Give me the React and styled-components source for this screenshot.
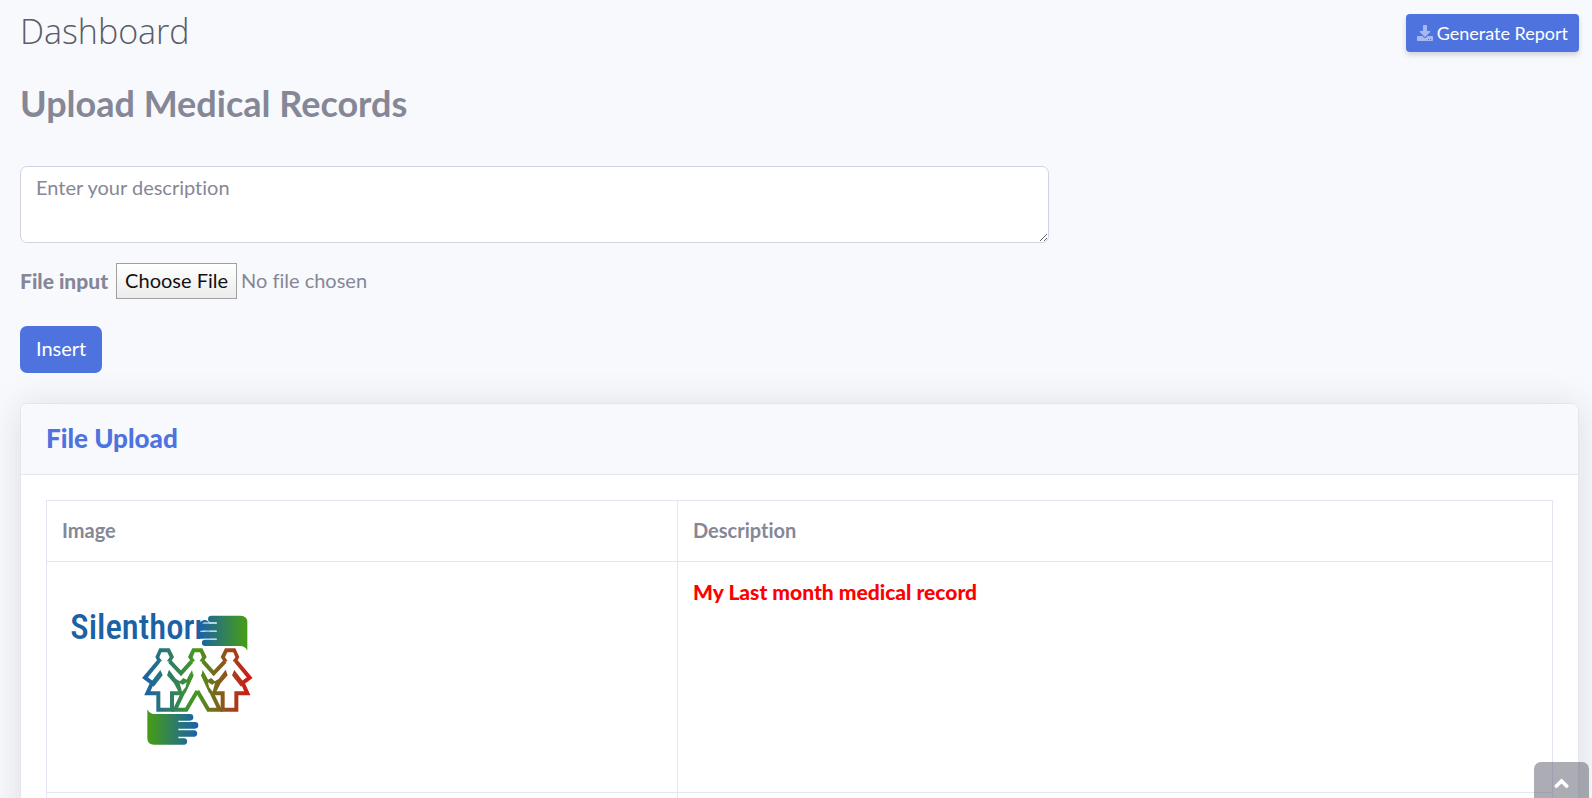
import React from 'react';
import styled, { createGlobalStyle } from 'styled-components';
import { FaDownload, FaAngleUp } from 'react-icons/fa';

const GlobalStyle = createGlobalStyle`
  *, *::before, *::after { box-sizing: border-box; }
  body {
    margin: 0;
    background: #f8f9fc;
    color: #858796;
    font-family: Lato, "Liberation Sans", sans-serif;
    font-size: 20px;
    font-variant-ligatures: none;
    line-height: 30px;
  }
  button, input, textarea { font-family: inherit; font-variant-ligatures: inherit; }
`;

const Page = styled.main`
  height: 100vh;
  overflow-y: auto;
  scrollbar-width: none;
  padding: 10px 13px 30px 20px;
`;

const TopBar = styled.header`
  display: flex;
  align-items: flex-end;
  justify-content: space-between;
  margin-bottom: 30px;
`;

const PageTitle = styled.h1`
  margin: 0;
  color: #5a5c69;
  font-family: "Open Sans", sans-serif;
  font-size: 34px;
  line-height: 42px;
  font-weight: 300;
`;

const SectionTitle = styled.h2`
  margin: 0;
  font-size: 36px;
  line-height: 42px;
  font-weight: 700;
`;

const ReportLink = styled.a`
  display: flex;
  align-items: center;
  gap: 4px;
  height: 38px;
  padding: 0 11px;
  border-radius: 4px;
  background: #4e73df;
  box-shadow: 0 3px 5px rgba(58, 59, 69, 0.2);
  color: #fff;
  font-size: 18px;
  text-decoration: none;
  svg { font-size: 16px; opacity: 0.5; }
`;

const Form = styled.form`
  display: flex;
  flex-direction: column;
  align-items: flex-start;
  margin: 42px 0 30px;
`;

const Description = styled.textarea`
  display: block;
  width: 66%;
  height: 77px;
  padding: 5px 15px;
  border: 1px solid #d1d3e2;
  border-radius: 7px;
  background: #fff;
  color: #6e707e;
  font-size: 20px;
  line-height: 30px;
  resize: vertical;
  &::placeholder { color: #858796; opacity: 1; }
`;

const FileRow = styled.div`
  display: flex;
  align-items: center;
  gap: 8px;
  margin: 20px 0 27px;
`;

const FileLabel = styled.label`
  font-size: 21px;
  font-weight: 900;
`;

const FileInput = styled.input`
  height: 36px;
  width: 400px;
  color: #858796;
  font-size: 20px;
  line-height: 30px;
  &::file-selector-button {
    height: 36px;
    margin: 0 4px 0 0;
    padding: 0 8px 2px;
    border: 1px solid #a0a0a0;
    border-radius: 0;
    background: linear-gradient(#fff, #ececec);
    color: #111;
    font: inherit;
  }
`;

const InsertButton = styled.button`
  height: 47px;
  padding: 0 16px 3px;
  border: 0;
  border-radius: 7px;
  background: #4e73df;
  color: #fff;
  font-size: 20px;
`;

const Card = styled.section`
  border: 1px solid #e3e6f0;
  border-radius: 7px;
  background: #fff;
  box-shadow: 0 3px 35px rgba(58, 59, 69, 0.15);
`;

const CardHeader = styled.header`
  padding: 19px 25px 21px;
  border-bottom: 1px solid #e3e6f0;
  border-radius: 6px 6px 0 0;
  background: #f8f9fc;
`;

const CardTitle = styled.h2`
  margin: 0;
  color: #4e73df;
  font-size: 26px;
  line-height: 30px;
  font-weight: 900;
`;

const CardBody = styled.div`
  padding: 25px;
`;

const RecordTable = styled.table`
  width: 100%;
  border-collapse: collapse;
  table-layout: fixed;
`;

const ImageColumn = styled.col`
  width: 41.9%;
`;

const HeadCell = styled.th`
  padding: 14px 15px 16px;
  border: 1px solid #e3e6f0;
  text-align: left;
  font-weight: 700;
`;

const Cell = styled.td`
  padding: 15px;
  border: 1px solid #e3e6f0;
  vertical-align: top;
`;

const RecordText = styled.strong`
  color: #f00;
  font-size: 21px;
  font-weight: 900;
`;

const Picture = styled.svg`
  display: block;
  width: 200px;
  height: 200px;
`;

const PictureText = styled.text`
  font-family: "Roboto Condensed", "Open Sans Condensed", sans-serif;
  font-size: 104px;
  font-weight: 500;
`;

const ScrollTop = styled.a`
  position: fixed;
  right: 3px;
  bottom: -22px;
  display: flex;
  align-items: center;
  justify-content: center;
  width: 55px;
  height: 58px;
  padding-bottom: 15px;
  border-radius: 7px;
  background: rgba(90, 92, 105, 0.5);
  color: #fff;
  svg { font-size: 23px; }
`;

const AXIS = 442;
const mirror = (pts) => pts.map(([x, y]) => [2 * AXIS - x, y]);
const toPoints = (pts) => pts.map((p) => p.join(',')).join(' ');

const girlHead = [[328, 175], [359, 175], [372, 201], [362, 217], [351, 213], [359, 202], [352, 187], [334, 187], [328, 202], [336, 213], [325, 218], [316, 201]];
const girlArm = [[326, 214], [285, 263], [306, 279], [292, 310], [325, 310], [325, 359], [366, 359], [366, 310], [396, 310]];
const wedge = [[331, 240], [338, 256], [311, 290], [301, 279]];
const innerWedge = [[357, 239], [378, 267], [390, 274], [400, 264], [410, 269], [426, 240], [430, 258], [407, 308], [390, 314], [372, 280], [351, 256]];
const heart = [[389, 279], [398, 284], [410, 277], [407, 291], [396, 305]];
const heldArms = [[359, 214], [393, 250], [425, 214]];
const middleLeg = [[426, 252], [375, 359], [409, 359], [442, 303]];
const middleHead = [[427, 175], [457, 175], [470, 201], [459, 217], [449, 213], [456, 202], [450, 187], [434, 187], [428, 202], [435, 213], [425, 217], [414, 201]];

function SilenthornLogo() {
  return (
    <Picture viewBox="36 -39 600 600" role="img" aria-label="Silenthorn logo">
      <defs>
        <linearGradient id="people" gradientUnits="userSpaceOnUse" x1="285" y1="0" x2="602" y2="0">
          <stop offset="0" stopColor="#1a62a8" />
          <stop offset="0.48" stopColor="#43991e" />
          <stop offset="1" stopColor="#d31616" />
        </linearGradient>
        <linearGradient id="handTop" gradientUnits="userSpaceOnUse" x1="448" y1="0" x2="580" y2="0">
          <stop offset="0" stopColor="#1a62a8" />
          <stop offset="1" stopColor="#43991e" />
        </linearGradient>
        <linearGradient id="handBottom" gradientUnits="userSpaceOnUse" x1="304" y1="0" x2="440" y2="0">
          <stop offset="0" stopColor="#43991e" />
          <stop offset="1" stopColor="#1a62a8" />
        </linearGradient>
      </defs>
      <PictureText x="61" y="147" fill="#1a62a5">Silenthorn</PictureText>
      <path
        fill="url(#handTop)"
        d="M484 77H572Q592 77 592 97V182Q586 168 570 168H465A9 9 0 0 1 465 149H500V146H454A10 10 0 0 1 454 125H500V122H454A10 10 0 0 1 454 101H500V97H484A10 10 0 0 1 484 77Z"
      />
      <path d="M460 99H500M460 123.500H500M462 147.500H500" stroke="#b5d3e0" strokeWidth="4" />
      <path
        fill="url(#handBottom)"
        d="M292 358Q298 372 314 372H420A10 10 0 0 1 420 392H385V396H435A10 10 0 0 1 435 416H385V421H435A10 10 0 0 1 435 440H385V445H402A9 9 0 0 1 402 464H312Q292 464 292 444Z"
      />
      <g fill="url(#people)">
        {[girlHead, mirror(girlHead), middleHead, wedge, mirror(wedge), innerWedge, mirror(innerWedge)].map((pts, i) => (
          <polygon key={i} points={toPoints(pts)} />
        ))}
      </g>
      <g fill="none" stroke="url(#people)" strokeWidth="12">
        {[girlArm, mirror(girlArm), heldArms, mirror(heldArms), middleLeg, mirror(middleLeg)].map((pts, i) => (
          <polyline key={i} points={toPoints(pts)} />
        ))}
      </g>
      <g fill="#fff">
        <polygon points={toPoints(heart)} />
        <polygon points={toPoints(mirror(heart))} />
      </g>
    </Picture>
  );
}

export default function App() {
  return (
    <>
      <GlobalStyle />
      <Page id="top">
        <TopBar>
          <PageTitle>Dashboard</PageTitle>
          <ReportLink href="#report">
            <FaDownload aria-hidden="true" />
            Generate Report
          </ReportLink>
        </TopBar>
        <SectionTitle>Upload Medical Records</SectionTitle>
        <Form onSubmit={(e) => e.preventDefault()}>
          <Description aria-label="Description" placeholder="Enter your description" />
          <FileRow>
            <FileLabel htmlFor="record-file">File input</FileLabel>
            <FileInput id="record-file" type="file" />
          </FileRow>
          <InsertButton type="submit">Insert</InsertButton>
        </Form>
        <Card>
          <CardHeader>
            <CardTitle>File Upload</CardTitle>
          </CardHeader>
          <CardBody>
            <RecordTable>
              <colgroup>
                <ImageColumn />
                <col />
              </colgroup>
              <thead>
                <tr>
                  <HeadCell scope="col">Image</HeadCell>
                  <HeadCell scope="col">Description</HeadCell>
                </tr>
              </thead>
              <tbody>
                <tr>
                  <Cell><SilenthornLogo /></Cell>
                  <Cell><RecordText>My Last month medical record</RecordText></Cell>
                </tr>
                <tr>
                  <Cell />
                  <Cell />
                </tr>
              </tbody>
            </RecordTable>
          </CardBody>
        </Card>
      </Page>
      <ScrollTop href="#top" aria-label="Scroll to top">
        <FaAngleUp aria-hidden="true" />
      </ScrollTop>
    </>
  );
}
